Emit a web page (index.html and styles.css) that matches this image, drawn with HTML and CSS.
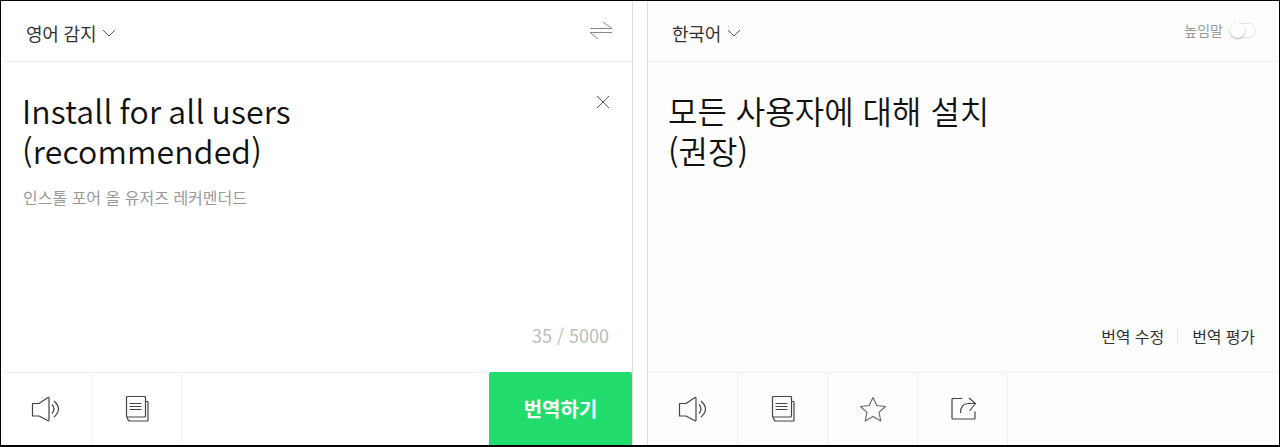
FILE: index.html
```html
<!DOCTYPE html>
<html lang="ko">
<head>
<meta charset="UTF-8">
<meta name="viewport" content="width=device-width, initial-scale=1.0">
<title>번역</title>
<link rel="stylesheet" href="styles.css">
</head>
<body>
<div class="translator">
    <section class="panel panel-source">
        <header class="panel-head">
            <button class="lang-select">영어 감지
                <svg class="chevron" width="14" height="8" viewBox="0 0 14 8"><path d="M1 1l6 6 6-6"/></svg>
            </button>
            <svg class="swap" width="24" height="20" viewBox="0 0 24 20"><path d="M1 8.500h22L14 2M23 12.500H1L9 19"/></svg>
        </header>
        <div class="panel-body">
            <svg class="clear" width="14" height="14" viewBox="0 0 14 14"><path d="M1 1l12 12M13 1L1 13"/></svg>
            <p class="main-text">Install for all users<br>(recommended)</p>
            <p class="phonetic">인스톨 포어 올 유저즈 레커멘더드</p>
            <div class="counter">35 / 5000</div>
        </div>
        <footer class="panel-foot">
            <button class="tool">
                <svg width="30" height="26" viewBox="1 0 30 26"><path d="M2.500 7.500h6.500L18 1.500q1-.4 1 .6v22q0 1-1 .6L9 20H2.500z"/><path d="M22 8.500q4 4.500 0 9M24 5q9 8 0 16"/></svg>
            </button>
            <button class="tool">
                <svg width="26" height="26" viewBox="1 0 26 26"><rect x="3.500" y=".5" width="19" height="20.500" rx="1"/><path d="M22.500 5.500h2q.5 0 .5 .5V24.500q0 .5-.5 .5H7q-2 0-3-4M6.500 7.500h12M6.500 10.500h12M6.500 13.500h12"/></svg>
            </button>
            <button class="translate-btn">번역하기</button>
        </footer>
    </section>

    <section class="panel panel-target">
        <header class="panel-head">
            <button class="lang-select">한국어
                <svg class="chevron" width="14" height="8" viewBox="0 0 14 8"><path d="M1 1l6 6 6-6"/></svg>
            </button>
            <div class="honorific">높임말<span class="toggle"></span></div>
        </header>
        <div class="panel-body">
            <p class="main-text">모든 사용자에 대해 설치<br>(권장)</p>
            <div class="result-links"><span>번역 수정</span><i></i><span>번역 평가</span></div>
        </div>
        <footer class="panel-foot">
            <button class="tool">
                <svg width="30" height="26" viewBox="1 0 30 26"><path d="M2.500 7.500h6.500L18 1.500q1-.4 1 .6v22q0 1-1 .6L9 20H2.500z"/><path d="M22 8.500q4 4.500 0 9M24 5q9 8 0 16"/></svg>
            </button>
            <button class="tool">
                <svg width="26" height="26" viewBox="1 0 26 26"><rect x="3.500" y=".5" width="19" height="20.500" rx="1"/><path d="M22.500 5.500h2q.5 0 .5 .5V24.500q0 .5-.5 .5H7q-2 0-3-4M6.500 7.500h12M6.500 10.500h12M6.500 13.500h12"/></svg>
            </button>
            <button class="tool">
                <svg class="star" width="28" height="26" viewBox="0 0 28 26"><path d="M14 1.500l3.800 8 8.700 1-6.500 5.800 1.800 8.700-7.800-4.400L6.200 25 8 16.300 1.500 10.500l8.700-1z"/></svg>
            </button>
            <button class="tool">
                <svg width="28" height="26" viewBox="-1 0 28 26"><path d="M12.500 2.500H3q-1 0-1 1V22q0 1 1 1h21q1 0 1-1v-6.500M10.500 17q0-9.500 8-9.500h7M19 2l6.500 5.500-6 7.500"/></svg>
            </button>
        </footer>
    </section>
</div>
</body>
</html>
```

FILE: styles.css
```css
html, body {
    margin: 0;
    padding: 0;
    height: 100%;
    overflow: hidden;
    background: #fff;
}

body {
    font-family: "Noto Sans CJK KR", "Noto Sans", sans-serif;
    color: #333;
}

button {
    font-family: inherit;
    border: 0;
    padding: 0;
    background: none;
}

svg {
    display: block;
    fill: none;
    stroke: #444;
    stroke-width: 1.2;
    stroke-linejoin: round;
}

.translator {
    display: flex;
    justify-content: space-between;
    box-sizing: border-box;
    height: 447px;
    border: 1px solid #000;
    border-bottom-width: 2px;
}

.panel {
    display: flex;
    flex-direction: column;
    width: 632px;
    box-sizing: border-box;
}

.panel-source {
    border-right: 1px solid #ddd;
}

.panel-target {
    width: 632px;
    border-left: 1px solid #ddd;
    background: #fdfdfd;
}

.panel-head {
    display: flex;
    align-items: center;
    justify-content: space-between;
    height: 61px;
    flex: none;
    box-sizing: border-box;
    border-bottom: 1px solid #f0f0f0;
    padding: 3px 19px 0 25px;
}

.panel-target .panel-head {
    padding-left: 24px;
}

.lang-select {
    display: flex;
    align-items: center;
    gap: 6px;
    font-size: 18px;
    letter-spacing: -0.2px;
    color: #333;
}

.chevron {
    stroke: #555;
    stroke-width: 1;
}

.swap {
    stroke: #888;
    stroke-width: 1;
    margin-top: -5px;
}

.panel-body {
    position: relative;
    flex: 1;
    padding: 28px 21px 0;
}

.panel-target .panel-body {
    padding-left: 20px;
}

.main-text {
    margin: 0;
    font-size: 32px;
    line-height: 40px;
    font-weight: 350;
    color: #111;
}

.panel-source .main-text {
    letter-spacing: 0.15px;
    word-spacing: -2px;
}

.phonetic {
    margin: 15px 0 0 1px;
    font-size: 16px;
    line-height: 24px;
    color: #999;
}

.clear {
    position: absolute;
    top: 33px;
    right: 22px;
    stroke: #555;
    stroke-width: 1;
}

.counter {
    position: absolute;
    right: 23px;
    bottom: 24px;
    font-size: 18px;
    color: #bbb;
}

.result-links {
    position: absolute;
    right: 24px;
    bottom: 24px;
    display: flex;
    align-items: center;
    gap: 13px;
    font-size: 16px;
    letter-spacing: -0.1px;
    color: #333;
}

.result-links i {
    width: 1px;
    height: 14px;
    margin-right: 1px;
    background: #e5e5e5;
}

.honorific {
    display: flex;
    align-items: center;
    gap: 7px;
    font-size: 14px;
    color: #999;
    margin-right: 4px;
    margin-top: -5px;
}

.toggle {
    position: relative;
    width: 24px;
    height: 13px;
    border: 1px solid #e5e5e5;
    border-radius: 8px;
    background: #fff;
}

/* toggle knob */
.toggle::before {
    content: "";
    position: absolute;
    left: -1px;
    top: -1px;
    width: 15px;
    height: 15px;
    border-radius: 50%;
    background: #fff;
    box-shadow: 0 1px 2px rgba(0, 0, 0, 0.3);
}

.panel-foot {
    display: flex;
    height: 73px;
    flex: none;
    box-sizing: border-box;
    border-top: 1px solid #f0f0f0;
}

.tool {
    display: flex;
    align-items: center;
    justify-content: center;
    width: 90px;
    box-sizing: border-box;
    border-right: 1px solid #f0f0f0;
}

.panel-source .tool:first-child {
    width: 91px;
}

.star {
    stroke: #666;
    stroke-width: 1.1;
}

.translate-btn {
    margin: -1px 0 0 auto;
    width: 143px;
    background: #22dd6e;
    color: #fff;
    font-size: 20px;
    font-weight: 700;
    border-radius: 2px 2px 0 0;
}
```
